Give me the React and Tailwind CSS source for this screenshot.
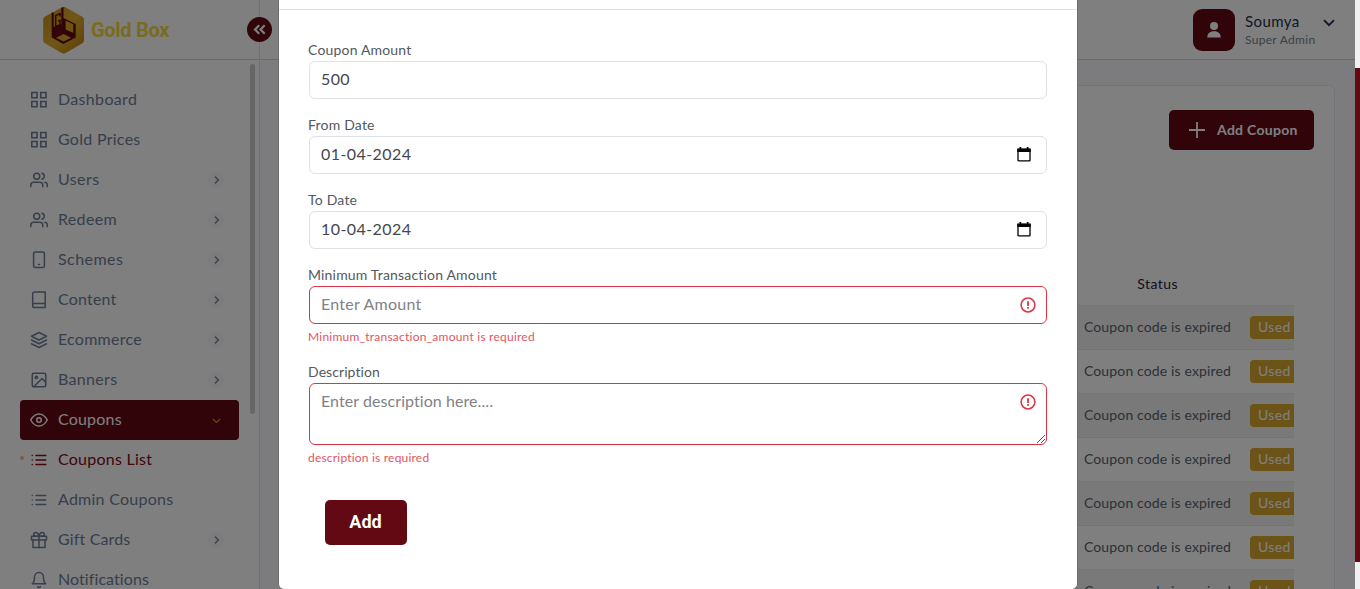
import React from "react";
import { FiUsers, FiLayers, FiImage, FiEye, FiList, FiGift, FiBell } from "react-icons/fi";

const GridIcon = () => (
  <svg width="18" height="18" viewBox="0 0 18 18" fill="none" stroke="currentColor" strokeWidth="1.6">
    <path d="M1.800 1.500h5.200v5.200H1.800zM10.800 1.500H16v5.200h-5.200zM1.800 10.500h5.200v5.200H1.800zM10.800 10.500H16v5.200h-5.200z" />
  </svg>
);
const TabletIcon = () => (
  <svg width="18" height="18" viewBox="0 0 18 18" fill="none" stroke="currentColor" strokeWidth="1.5" strokeLinecap="round">
    <rect x="3.600" y="1" width="10.800" height="15.600" rx="1.400" />
    <path d="M8.500 13.400h1" />
  </svg>
);
const BookIcon = () => (
  <svg width="18" height="18" viewBox="0 0 18 18" fill="none" stroke="currentColor" strokeWidth="1.5" strokeLinejoin="round">
    <path d="M15.200 1H4.600a1.900 1.900 0 0 0-1.900 1.900v11.800c0 1.100.8 1.900 1.900 1.900h10.600zM2.700 14.400c0-1 .8-1.800 1.900-1.800h10.600" />
  </svg>
);

const nav = [
  { label: "Dashboard", icon: GridIcon, track: "tracking-[0.33px]" },
  { label: "Gold Prices", icon: GridIcon, track: "tracking-[0.28px]" },
  { label: "Users", icon: FiUsers, more: true, track: "tracking-[0.4px]" },
  { label: "Redeem", icon: FiUsers, more: true, track: "tracking-[0.33px]" },
  { label: "Schemes", icon: TabletIcon, more: true, track: "tracking-[0.45px]" },
  { label: "Content", icon: BookIcon, more: true, track: "tracking-[0.2px]" },
  { label: "Ecommerce", icon: FiLayers, more: true, track: "tracking-[0.25px]" },
  { label: "Banners", icon: FiImage, more: true, track: "tracking-[0.33px]" },
  { label: "Coupons", icon: FiEye, active: true, track: "tracking-[0.2px]" },
  { label: "Coupons List", icon: FiList, current: true, track: "tracking-[0.25px]" },
  { label: "Admin Coupons", icon: FiList, track: "tracking-[0.25px]" },
  { label: "Gift Cards", icon: FiGift, more: true, track: "tracking-[0.15px]" },
  { label: "Notifications", icon: FiBell, track: "tracking-[0.08px]" },
];

function NavItem({ item }) {
  const Icon = item.icon;
  const tone = item.active
    ? "bg-[#620913] text-white"
    : item.current
    ? "text-[#800a1a]"
    : "text-[#6e7c98]";
  return (
    <li className={"relative flex h-10 shrink-0 items-center rounded px-[10px] " + tone}>
      {item.current && <span className="absolute left-0 top-[16px] size-1 rounded-full bg-[#ffb98a]" />}
      <span className={item.icon === GridIcon ? "" : "pb-px"}>
        <Icon size={18} strokeWidth={2} />
      </span>
      <span className={"ml-[10px] flex-1 pb-0.5 text-base " + item.track}>{item.label}</span>
      {item.more && (
        <span className="mb-px mr-[5px] flex size-4 items-center justify-center rounded-full bg-[#f8f8fb]">
          <svg width="16" height="16" viewBox="0 0 16 16" fill="none" stroke="currentColor" strokeWidth="1.3">
            <path d="M6.900 4.500 10.400 8l-3.500 3.500" />
          </svg>
        </span>
      )}
      {item.active && (
        <svg className="mr-[5px] text-[#d5902c]" width="16" height="16" viewBox="0 0 16 16" fill="none" stroke="currentColor" strokeWidth="1.1">
          <path d="M4.900 7 8.500 10.500 12.100 7" />
        </svg>
      )}
    </li>
  );
}

function Logo() {
  return (
    <svg width="43" height="48" viewBox="0 0 43 48">
      <defs>
        <linearGradient id="gold" x1="0" y1="0" x2="1" y2="1">
          <stop offset="0" stopColor="#c48a18" />
          <stop offset=".5" stopColor="#e0ae2e" />
          <stop offset="1" stopColor="#b8800f" />
        </linearGradient>
      </defs>
      <path d="M19.700 1.400q2-1.200 4 0L40.400 10.700q1.600 1 1.600 2.800v21q0 1.800-1.600 2.800L23.700 47q-2 1.200-4 0L2.800 37.300Q1.200 36.300 1.200 34.500v-21q0-1.800 1.600-2.800z" fill="url(#gold)" />
      <path d="M9.700 6.300 11.700 7v14l7.600-3V1.800l2.200-.6v10.900L33.700 18v13.400l-12.300 6.500L9.700 31.500z" fill="#620913" />
      <path d="M23.700 14.600 31.300 18.300v8.400l-7.600-3.300zM14 31.700 21.700 28 29 31.700 21.700 35.500z" fill="#d9a62b" />
      <path d="M18 10.500V7.600l-4.300 1.900v11.300l4.300-2v-4.600l-2 .9" fill="none" stroke="#620913" strokeWidth="1.500" />
    </svg>
  );
}

const Calendar = () => (
  <svg className="mb-px" width="14" height="15" viewBox="0 0 14 15" fill="none">
    <path d="M2.500 0h1.700v2H2.500zM9.800 0h1.700v2H9.800zM0.300 1.500h13.400V5H0.300z" fill="#000" />
    <rect x="1" y="2.500" width="12" height="11.300" rx=".6" stroke="#000" strokeWidth="1.300" />
  </svg>
);
const Alert = () => (
  <svg width="16" height="16" viewBox="0 0 16 16" fill="none" stroke="#dc3545">
    <circle cx="8" cy="8" r="6.900" strokeWidth="1.500" />
    <path d="M8 4.200v4.700" strokeWidth="1.800" />
    <path d="M8 10v1.700" strokeWidth="1.800" />
  </svg>
);

function Label({ children, track }) {
  return <div className={"-ml-px h-[21px] text-[14px] leading-[19px] text-[#535861] " + track}>{children}</div>;
}

function Field({ label, value, icon, invalid, placeholder, labelTrack, track }) {
  return (
    <div className="mb-4">
      <Label track={labelTrack}>{label}</Label>
      <div
        className={
          "flex h-[38px] items-center justify-between rounded-md border pl-[11px] text-base " +
          (invalid ? "border-[#dc3545] pr-[10px] " : "border-[#dee2e6] pr-[15px] ") +
          (placeholder ? "text-[#7f8286] " : "text-[#44474c] ") +
          track
        }
      >
        <span className="pb-0.5">{value || placeholder}</span>
        {icon}
      </div>
      {invalid && <div className="-ml-px mt-1 h-[18px] text-[12px] leading-[18px] tracking-[0.23px] text-[#e25563]">{invalid}</div>}
    </div>
  );
}

export default function App() {
  return (
    <div className="flex h-[589px] w-[1360px] overflow-hidden bg-[#f1f1f1] font-['Lato','Open_Sans',sans-serif]">
      <div className="relative flex h-full w-[1355px] shrink-0 overflow-hidden bg-[#f9f8fd]">
        <aside className="flex w-[260px] shrink-0 flex-col border-r border-[#e2e2e8] bg-white">
          <div className="relative flex h-[60px] shrink-0 items-center border-b border-[#d5d5da] pl-[42px]">
            <Logo />
            <span className="ml-[6px] font-['Roboto',sans-serif] text-[20px] font-bold tracking-[-0.3px] text-[#f2d640]">Gold Box</span>
            <span className="absolute right-[-13px] top-[17px] z-10 flex size-[25px] items-center justify-center rounded-full bg-[#620913]">
              <svg width="13" height="11" viewBox="0 0 13 11" fill="none" stroke="#fff" strokeWidth="2.200">
                <path d="M6.200 1.200 2 5.500l4.200 4.300M11.700 1.200 7.500 5.500l4.200 4.300" />
              </svg>
            </span>
          </div>
          <div className="flex min-h-0 flex-1 justify-between overflow-hidden pl-5 pr-1">
            <ul className="flex w-[219px] flex-col pt-5">
              {nav.map((item) => (
                <NavItem key={item.label} item={item} />
              ))}
            </ul>
            <div className="mt-1 h-[350px] w-[5px] rounded-full bg-[#cdcdcd]" />
          </div>
        </aside>

        <main className="flex min-w-0 flex-1 flex-col">
          <header className="flex h-[60px] shrink-0 items-center justify-end border-b border-[#d5d5da] bg-white pr-5">
            <div className="flex size-[42px] items-center justify-center rounded-[9px] bg-[#620913]">
              <svg width="14" height="16" viewBox="0 0 14 16" fill="#fff">
                <circle cx="7" cy="4" r="4" />
                <path d="M.3 15.500C.3 11.600 2.700 9.300 7 9.300s6.700 2.300 6.700 6.200z" />
              </svg>
            </div>
            <div className="ml-[10px] flex w-[78px] flex-col pt-px">
              <span className="text-[15px] leading-[19px] tracking-[0.4px] text-[#22304f]">Soumya</span>
              <span className="text-[12px] leading-[17px] tracking-[0.3px] text-[#78818c]">Super Admin</span>
            </div>
            <svg className="mb-[14px]" width="12" height="8" viewBox="0 0 12 8" fill="none" stroke="#22304f" strokeWidth="1.900">
              <path d="M1 1.200 6 6.200 11 1.200" />
            </svg>
          </header>
          <section className="mx-5 mt-[25px] flex flex-1 flex-col overflow-hidden rounded-t-md border border-b-0 border-[#ebebf0] bg-white pl-5 pr-10">
            <div className="-mr-5 mt-6 flex justify-end">
              <div className="flex h-10 w-[145px] items-center rounded-[5px] bg-[#620913] pl-5 text-white">
                <svg width="16" height="16" viewBox="0 0 16 16" stroke="currentColor" strokeWidth="1.800">
                  <path d="M8 0v16M0 8h16" />
                </svg>
                <span className="ml-[12px] whitespace-nowrap pb-px text-[14px] font-bold tracking-[0.3px]">Add Coupon</span>
              </div>
            </div>
            <div className="mt-[114px] flex h-[42px] shrink-0 justify-end border-b border-[#e8e8ea] pr-[116px]">
              <span className="mt-[9px] text-[14px] leading-[21px] tracking-[0.45px] text-[#1c222b]">Status</span>
            </div>
            <div className="flex flex-col">
              {[0, 1, 2, 3, 4, 5, 6].map((row) => (
                <div key={row} className="flex h-11 shrink-0 items-center justify-end overflow-hidden border-b border-[#e8e8ea] odd:bg-[#f2f2f2]">
                  <span className="mr-[19px] pb-[3px] text-[14px] tracking-[0.14px] text-[#56646f]">Coupon code is expired</span>
                  <span className="flex h-[23px] w-11 items-center rounded-l bg-[#d8a72f] pb-[3px] pl-[8px] text-[14px] tracking-[0.4px] text-white">Used</span>
                </div>
              ))}
            </div>
          </section>
        </main>

        <div className="absolute inset-0 z-20 flex justify-center bg-black/50 pl-px">
          <div className="flex h-[590px] w-[800px] flex-col rounded-b-md border border-t-0 border-[#6d6d6d] bg-white">
            <div className="h-[10px] shrink-0 border-b border-[#dee2e6]" />
            <form className="flex flex-col px-[30px] pt-[30px]">
              <Field label="Coupon Amount" value="500" labelTrack="tracking-[0.18px]" track="tracking-[0.4px]" />
              <Field label="From Date" value="01-04-2024" icon={<Calendar />} labelTrack="tracking-[0.2px]" track="tracking-[0.43px]" />
              <Field label="To Date" value="10-04-2024" icon={<Calendar />} labelTrack="tracking-[0.2px]" track="tracking-[0.43px]" />
              <Field label="Minimum Transaction Amount" placeholder="Enter Amount" invalid="Minimum_transaction_amount is required" icon={<Alert />} labelTrack="tracking-[0.18px]" track="tracking-[0.25px]" />
              <div>
                <Label track="tracking-[0.08px]">Description</Label>
                <div className="relative flex h-[62px] items-start justify-between rounded-md border border-[#dc3545] pl-[11px] pr-[10px] pt-[5px] text-base leading-6 text-[#7f8286]">
                  <span className="tracking-[0.07px]">Enter description here....</span>
                  <span className="mt-[5px]"><Alert /></span>
                  <svg className="absolute bottom-0 right-0" width="10" height="10" viewBox="0 0 10 10" stroke="#555" strokeWidth="1">
                    <path d="M1 9 9 1M5 9l4-4" />
                  </svg>
                </div>
                <div className="-ml-px mt-1 h-[18px] text-[12px] leading-[18px] tracking-[0.2px] text-[#e25563]">description is required</div>
              </div>
              <button type="button" className="ml-4 mt-[33px] h-[45px] w-[82px] rounded-[5px] bg-[#620913] pb-0.5 pr-px font-['Roboto',sans-serif] text-[18px] font-bold text-white">
                Add
              </button>
            </form>
          </div>
        </div>
      </div>
      <div className="flex w-[5px] flex-col pt-[68px]">
        <div className="h-[494px] bg-[#620913]" />
      </div>
    </div>
  );
}
